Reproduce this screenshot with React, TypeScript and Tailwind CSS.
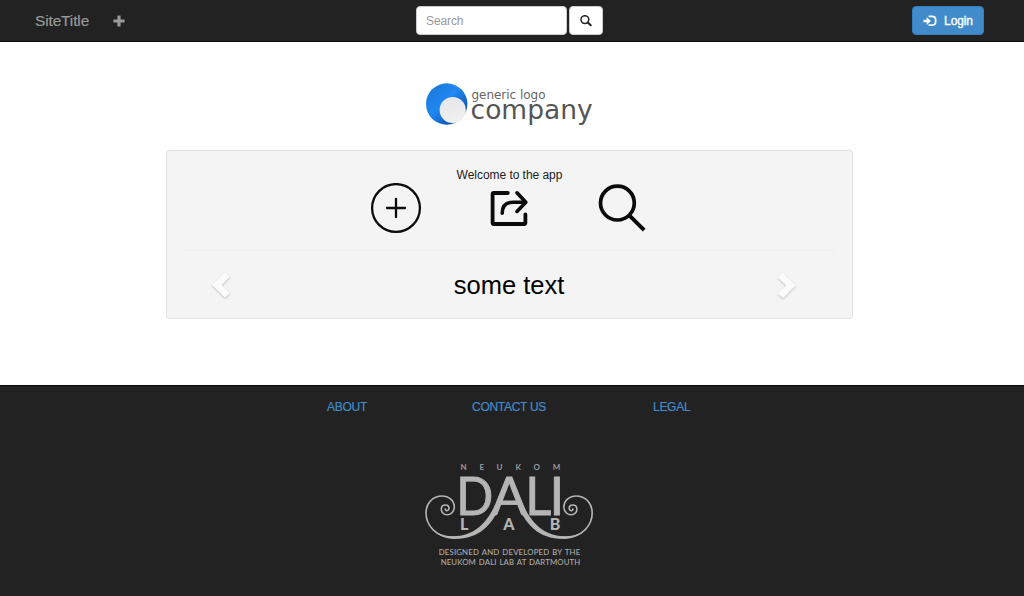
import React from "react";

const Plus = () => (
  <svg className="h-[12px] w-[12px]" viewBox="0 0 12 12" fill="#999">
    <path d="M4.4 0.9q0-.5.5-.5h2.2q.5 0 .5.5v3.5h3.5q.5 0 .5.5v2.2q0 .5-.5.5H7.6v3.5q0 .5-.5.5H4.9q-.5 0-.5-.5V7.6H.9q-.5 0-.5-.5V4.9q0-.5.5-.5h3.5z" />
  </svg>
);

const SmallSearch = () => (
  <svg className="h-[12px] w-[12px]" viewBox="0 0 12 12" fill="none" stroke="#222">
    <circle cx="4.9" cy="4.6" r="3.9" strokeWidth="1.5" />
    <path d="M7.8 7.6L10.7 10.3" strokeWidth="2" strokeLinecap="round" />
  </svg>
);

const LoginIcon = () => (
  <svg className="h-[12px] w-[14px]" viewBox="0 0 14 12" fill="none">
    <path d="M.5 4.7h3.2V2.1L7.9 6 3.7 9.9V7.3H.5z" fill="#fff" />
    <path d="M5.6 1.3h3.3q3.7 0 3.7 3.5v1.9q0 3.5-3.7 3.5H5.6" stroke="#fff" strokeWidth="1.8" />
  </svg>
);

const CompanyLogo = () => (
  <svg className="h-[50px] w-[180px]" viewBox="0 0 180 50">
    <defs>
      <linearGradient id="ball" x1="0.1" y1="0.1" x2="0.85" y2="0.9">
        <stop offset="0" stopColor="#1b78d8" />
        <stop offset="0.45" stopColor="#1f88f2" />
        <stop offset="1" stopColor="#0a4aa5" />
      </linearGradient>
      <linearGradient id="disc" x1="0" y1="0" x2="0.3" y2="1">
        <stop offset="0" stopColor="#e3e4e8" />
        <stop offset="1" stopColor="#f0f0f0" />
      </linearGradient>
    </defs>
    <circle cx="26.7" cy="24" r="20.7" fill="url(#ball)" />
    <circle cx="32.7" cy="30" r="13.1" fill="url(#disc)" />
    <text x="51.5" y="18.8" fontSize="12" textLength="74" className="font-['DejaVu_Sans',sans-serif]" fill="#666">generic logo</text>
    <text x="50.6" y="38.6" fontSize="26.5" textLength="122" lengthAdjust="spacingAndGlyphs" className="font-['DejaVu_Sans',sans-serif]" fill="#555">company</text>
  </svg>
);

const swirl =
  "M83.5 49 C76 66 64 82.4 38 82.4 C21 82.4 11 70 11 58 C11 48 18 41 27 41 C34 41 39.3 45.8 39.3 52 C39.3 56.8 35.6 59.8 32 59.8 C28.5 59.8 26.3 57 26.3 54.2 C26.3 51.5 28.3 50 30.5 50 C32.8 50 34 51.6 34 53.3 C34 55 32.6 56 31.3 55.6 C30.2 55.2 30 54 30.8 53.5";
const swell =
  "M80 50 L86 49 C79 66 67 84.8 38 84 C28 83.4 19 78 15 72 C21 78.5 29 81.2 38 81.2 C60 81.2 72 67 80 50Z";

const LabLogo = () => (
  <svg className="h-[120px] w-[190px]" viewBox="0 0 190 120" fill="#b5b5b5">
    <g className="font-['Lato',sans-serif]">
      <g fontSize="8" className="font-bold" textAnchor="middle" fill="#999">
        <text x="48.7" y="15.4">N</text>
        <text x="66.8" y="15.4">E</text>
        <text x="84.6" y="15.4">U</text>
        <text x="103.2" y="15.4">K</text>
        <text x="121.8" y="15.4">O</text>
        <text x="141.6" y="15.4">M</text>
      </g>
      <g fontSize="52.5" stroke="#b5b5b5" strokeWidth="0.9">
        <text x="41.2" y="59.6" textLength="37" lengthAdjust="spacingAndGlyphs">D</text>
        <text x="76.3" y="59.6" textLength="36" lengthAdjust="spacingAndGlyphs">A</text>
        <text x="110.2" y="59.6" textLength="26" lengthAdjust="spacingAndGlyphs">L</text>
        <text x="134.6" y="59.6">I</text>
      </g>
      <g fontSize="16" className="font-black" textAnchor="middle">
        <text x="49.3" y="75.2">L</text>
        <text x="93.9" y="75.2">A</text>
        <text x="140" y="75.2">B</text>
      </g>
      <g fontSize="7.8" className="font-medium" fill="#aaa">
        <text x="23.7" y="99.7" textLength="141.5" wordSpacing="0.8">DESIGNED AND DEVELOPED BY THE</text>
        <text x="25.7" y="109.9" textLength="139.5" wordSpacing="0.8">NEUKOM DALI LAB AT DARTMOUTH</text>
      </g>
    </g>
    <g>
      <path d={swirl} fill="none" stroke="#b5b5b5" strokeWidth="1.6" />
      <path d={swell} />
    </g>
    <g transform="translate(188.2 0) scale(-1 1)">
      <path d={swirl} fill="none" stroke="#b5b5b5" strokeWidth="1.6" />
      <path d={swell} />
    </g>
  </svg>
);

const Chevron = ({ right = false }: { right?: boolean }) => (
  <svg
    className="h-[30px] w-[24px] drop-shadow-[0_1px_1px_rgba(0,0,0,0.22)]"
    viewBox="0 0 24 30"
    fill="#fbfbfb"
  >
    <path d={right ? "M8 2.8L20.6 15.5 8 28.2 3 23.6 11.2 15.5 3 7.4z" : "M16 2.2L3.2 15 16 27.8 20.8 23.2 12.6 15 20.8 6.8z"} />
  </svg>
);

export default function App() {
  return (
    <div className="flex h-[596px] w-[1024px] flex-col overflow-hidden bg-white font-['Liberation_Sans',Arial,sans-serif] text-[12px] text-[#222]">
      <header className="flex h-[42px] shrink-0 items-center border-b border-[#080808] bg-[#222] pr-[40px] pl-[35px]">
        <span className="w-[78px] text-[15.4px] tracking-[-0.1px] text-[#999] [-webkit-text-stroke:0.2px_#999]">SiteTitle</span>
        <Plus />
        <form className="ml-[291px] flex gap-[2px]">
          <input
            aria-label="Search"
            placeholder="Search"
            className="h-[29px] w-[151px] rounded-[4px] border border-[#ccc] bg-white px-[9px] text-[12px] tracking-[-0.1px] placeholder:text-[#999]"
          />
          <button type="button" aria-label="Submit" className="flex h-[29px] w-[34px] items-center justify-center rounded-[4px] border border-[#ccc] bg-white">
            <SmallSearch />
          </button>
        </form>
        <button className="ml-auto flex h-[29px] w-[72px] items-center justify-center gap-[7px] rounded-[4px] border border-[#357ebd] bg-[#428bca] text-[12px] tracking-[-0.1px] text-white [-webkit-text-stroke:0.35px_white]">
          <LoginIcon />
          Login
        </button>
      </header>

      <main className="flex h-[343px] shrink-0 flex-col items-center pr-[5px]">
        <div className="mt-[38px] flex h-[70px] w-[180px]">
          <CompanyLogo />
        </div>
        <section className="flex h-[169px] w-[687px] flex-col rounded-[3px] border border-[#e3e3e3] bg-[#f4f4f4] px-[17px]">
          <p className="mt-[16px] h-[16px] text-center leading-[16px] tracking-[-0.04px]">Welcome to the app</p>
          <div className="flex h-[67px] items-start pl-[186px]">
            <svg className="h-[52px] w-[52px]" viewBox="0 0 52 52" fill="none" stroke="#0b0b0b">
              <circle cx="26" cy="25" r="23.9" strokeWidth="2.3" />
              <path d="M17 25h18M26 16v18" strokeWidth="2.3" strokeLinecap="round" />
            </svg>
            <svg className="ml-[66px] h-[52px] w-[44px]" viewBox="0 0 44 52" fill="none" stroke="#0b0b0b" strokeLinecap="round" strokeLinejoin="round">
              <path d="M19.8 10H5.8q-1.2 0-1.2 1.2v28.6q0 1.2 1.2 1.2h30.4q1.2 0 1.2-1.2V31.5" strokeWidth="3.8" />
              <path d="M14.2 30.2q0-11 11-11H36.9M29 9.8l8.8 9.4-8.8 9.2" strokeWidth="3.6" />
            </svg>
            <svg className="ml-[65px] h-[52px] w-[52px]" viewBox="0 0 52 52" fill="none" stroke="#0b0b0b">
              <circle cx="20.4" cy="20.1" r="16.9" strokeWidth="3.7" />
              <path d="M32 32.1L47.2 47.2" strokeWidth="3.9" />
            </svg>
          </div>
          <hr className="border-[#eeeeee]" />
          <div className="flex h-[67px] items-center pl-[25px]">
            <Chevron />
            <h2 className="w-[542px] pt-[2px] pl-[10px] text-center text-[25.5px] leading-none text-black">some text</h2>
            <Chevron right />
          </div>
        </section>
      </main>

      <footer className="flex h-[211px] shrink-0 flex-col border-t border-[#080808] bg-[#222]">
        <nav className="flex h-[41px] items-center pl-[327px] text-[12px] tracking-[-0.28px] text-[#428bca] [-webkit-text-stroke:0.2px_#428bca]">
          <a className="w-[145px]">ABOUT</a>
          <a className="w-[181px]">CONTACT US</a>
          <a>LEGAL</a>
        </nav>
        <div className="mt-[28px] ml-[415px] flex">
          <LabLogo />
        </div>
      </footer>
    </div>
  );
}
